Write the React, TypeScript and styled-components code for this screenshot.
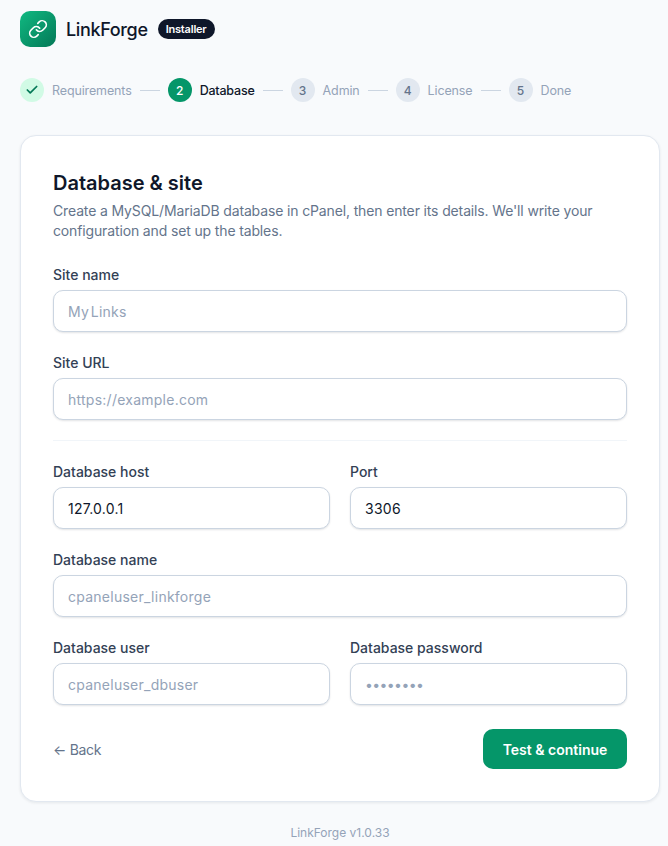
import React from "react";
import styled, { createGlobalStyle } from "styled-components";
import { Check, Link } from "lucide-react";

const GlobalStyle = createGlobalStyle`
  html, body {
    margin: 0;
    padding: 0;
    background: #f8fafc;
    font-family: Inter, "Noto Sans", sans-serif;
  }
  * { box-sizing: border-box; }
`;

const Page = styled.div`
  width: 668px;
  height: 846px;
  overflow: hidden;
  padding: 11px 8px 0 20px;
`;

const Brand = styled.header`
  display: flex;
  align-items: center;
  height: 36px;
`;

const Logo = styled.div`
  width: 36px;
  height: 36px;
  border-radius: 10px;
  background: linear-gradient(135deg, #10b981, #047857);
  display: flex;
  align-items: center;
  justify-content: center;
  color: #fff;
`;

const BrandName = styled.span`
  margin-left: 10px;
  font-size: 18px;
  font-weight: 500;
  letter-spacing: -0.35px;
  color: #0f172a;
`;

const Badge = styled.span`
  margin-left: 10px;
  height: 20px;
  padding: 0 8px;
  border-radius: 10px;
  background: #0f172a;
  color: #fff;
  font-size: 11px;
  font-weight: 600;
  letter-spacing: -0.2px;
  line-height: 20px;
`;

const Stepper = styled.nav`
  display: flex;
  align-items: center;
  margin-top: 31px;
  height: 24px;
`;

const Step = styled.div`
  display: flex;
  align-items: center;
  gap: 8px;
`;

const Circle = styled.span<{ $state: string }>`
  width: 24px;
  height: 24px;
  border-radius: 50%;
  display: flex;
  align-items: center;
  justify-content: center;
  font-size: 12px;
  font-weight: 500;
  background: ${({ $state }) =>
    $state === "done" ? "#d1fae5" : $state === "active" ? "#059669" : "#e2e8f0"};
  color: ${({ $state }) =>
    $state === "done" ? "#047857" : $state === "active" ? "#fff" : "#64748b"};
`;

const StepLabel = styled.span<{ $active: boolean }>`
  font-size: 12.5px;
  letter-spacing: ${({ $active }) => ($active ? "-0.2px" : "-0.13px")};
  font-weight: ${({ $active }) => ($active ? 500 : 400)};
  color: ${({ $active }) => ($active ? "#0f172a" : "#94a3b8")};
`;

const StepLine = styled.span`
  width: 20px;
  height: 1px;
  margin: 0 8px;
  background: #cbd5e1;
`;

const Card = styled.main`
  margin-top: 33px;
  width: 640px;
  height: 667px;
  padding: 32px;
  background: #fff;
  border: 1px solid #e2e8f0;
  border-radius: 16px;
  box-shadow: 0 1px 3px rgba(15, 23, 42, 0.08);
`;

const Title = styled.h1`
  margin: 1px 0 0;
  font-size: 20px;
  line-height: 28px;
  font-weight: 600;
  color: #0f172a;
`;

const Intro = styled.p`
  margin: 4px 0 0;
  font-size: 14px;
  line-height: 20px;
  letter-spacing: -0.14px;
  color: #64748b;
`;

const Form = styled.div`
  margin-top: 23px;
  display: flex;
  flex-direction: column;
  gap: 20px;
`;

const Row = styled.div`
  display: grid;
  grid-template-columns: 277px 277px;
  gap: 20px;
`;

const Field = styled.label`
  display: flex;
  flex-direction: column;
  gap: 4px;
`;

const Label = styled.span`
  font-size: 14px;
  line-height: 22px;
  font-weight: 500;
  color: #334155;
`;

const Input = styled.input`
  width: 100%;
  height: 42px;
  padding: 0 14px;
  border: 1px solid #cbd5e1;
  border-radius: 10px;
  background: #fff;
  box-shadow: 0 1px 2px rgba(15, 23, 42, 0.12);
  font-family: inherit;
  font-size: 14px;
  letter-spacing: 0.25px;
  word-spacing: -2.5px;
  color: #0f172a;
  outline: none;
  &::placeholder { color: #94a3b8; opacity: 1; }
`;

const PasswordInput = styled(Input)`
  letter-spacing: -0.6px;
`;

const Divider = styled.hr`
  margin: 0;
  border: 0;
  border-top: 1px solid #f1f5f9;
`;

const Actions = styled.div`
  display: flex;
  align-items: center;
  justify-content: space-between;
  margin-top: 4px;
`;

const BackLink = styled.a`
  font-size: 14px;
  letter-spacing: -0.3px;
  color: #64748b;
`;

const Primary = styled.button`
  height: 40px;
  width: 144px;
  border: 0;
  border-radius: 10px;
  background: #059669;
  color: #fff;
  font-family: inherit;
  font-size: 14px;
  font-weight: 600;
`;

const Footer = styled.footer`
  margin-top: 23px;
  text-align: center;
  font-size: 12px;
  line-height: 16px;
  color: #94a3b8;
`;

const steps = ["Requirements", "Database", "Admin", "License", "Done"];

const App = () => (
  <Page>
    <GlobalStyle />
    <Brand>
      <Logo>
        <Link size={20} strokeWidth={2} />
      </Logo>
      <BrandName>LinkForge</BrandName>
      <Badge>Installer</Badge>
    </Brand>
    <Stepper>
      {steps.map((name, i) => {
        const state = i === 0 ? "done" : i === 1 ? "active" : "todo";
        return (
          <React.Fragment key={name}>
            {i > 0 && <StepLine />}
            <Step>
              <Circle $state={state}>
                {i === 0 ? <Check size={14} strokeWidth={3} /> : i + 1}
              </Circle>
              <StepLabel $active={i === 1}>{name}</StepLabel>
            </Step>
          </React.Fragment>
        );
      })}
    </Stepper>
    <Card>
      <Title>Database &amp; site</Title>
      <Intro>
        Create a MySQL/MariaDB database in cPanel, then enter its details. We'll write your
        configuration and set up the tables.
      </Intro>
      <Form>
        <Field>
          <Label>Site name</Label>
          <Input placeholder="My Links" />
        </Field>
        <Field>
          <Label>Site URL</Label>
          <Input placeholder="https://example.com" />
        </Field>
        <Divider />
        <Row>
          <Field>
            <Label>Database host</Label>
            <Input defaultValue="127.0.0.1" />
          </Field>
          <Field>
            <Label>Port</Label>
            <Input defaultValue="3306" />
          </Field>
        </Row>
        <Field>
          <Label>Database name</Label>
          <Input placeholder="cpaneluser_linkforge" />
        </Field>
        <Row>
          <Field>
            <Label>Database user</Label>
            <Input placeholder="cpaneluser_dbuser" />
          </Field>
          <Field>
            <Label>Database password</Label>
            <PasswordInput type="password" placeholder="••••••••" />
          </Field>
        </Row>
        <Actions>
          <BackLink>← Back</BackLink>
          <Primary>Test &amp; continue</Primary>
        </Actions>
      </Form>
    </Card>
    <Footer>LinkForge v1.0.33</Footer>
  </Page>
);

export default App;
